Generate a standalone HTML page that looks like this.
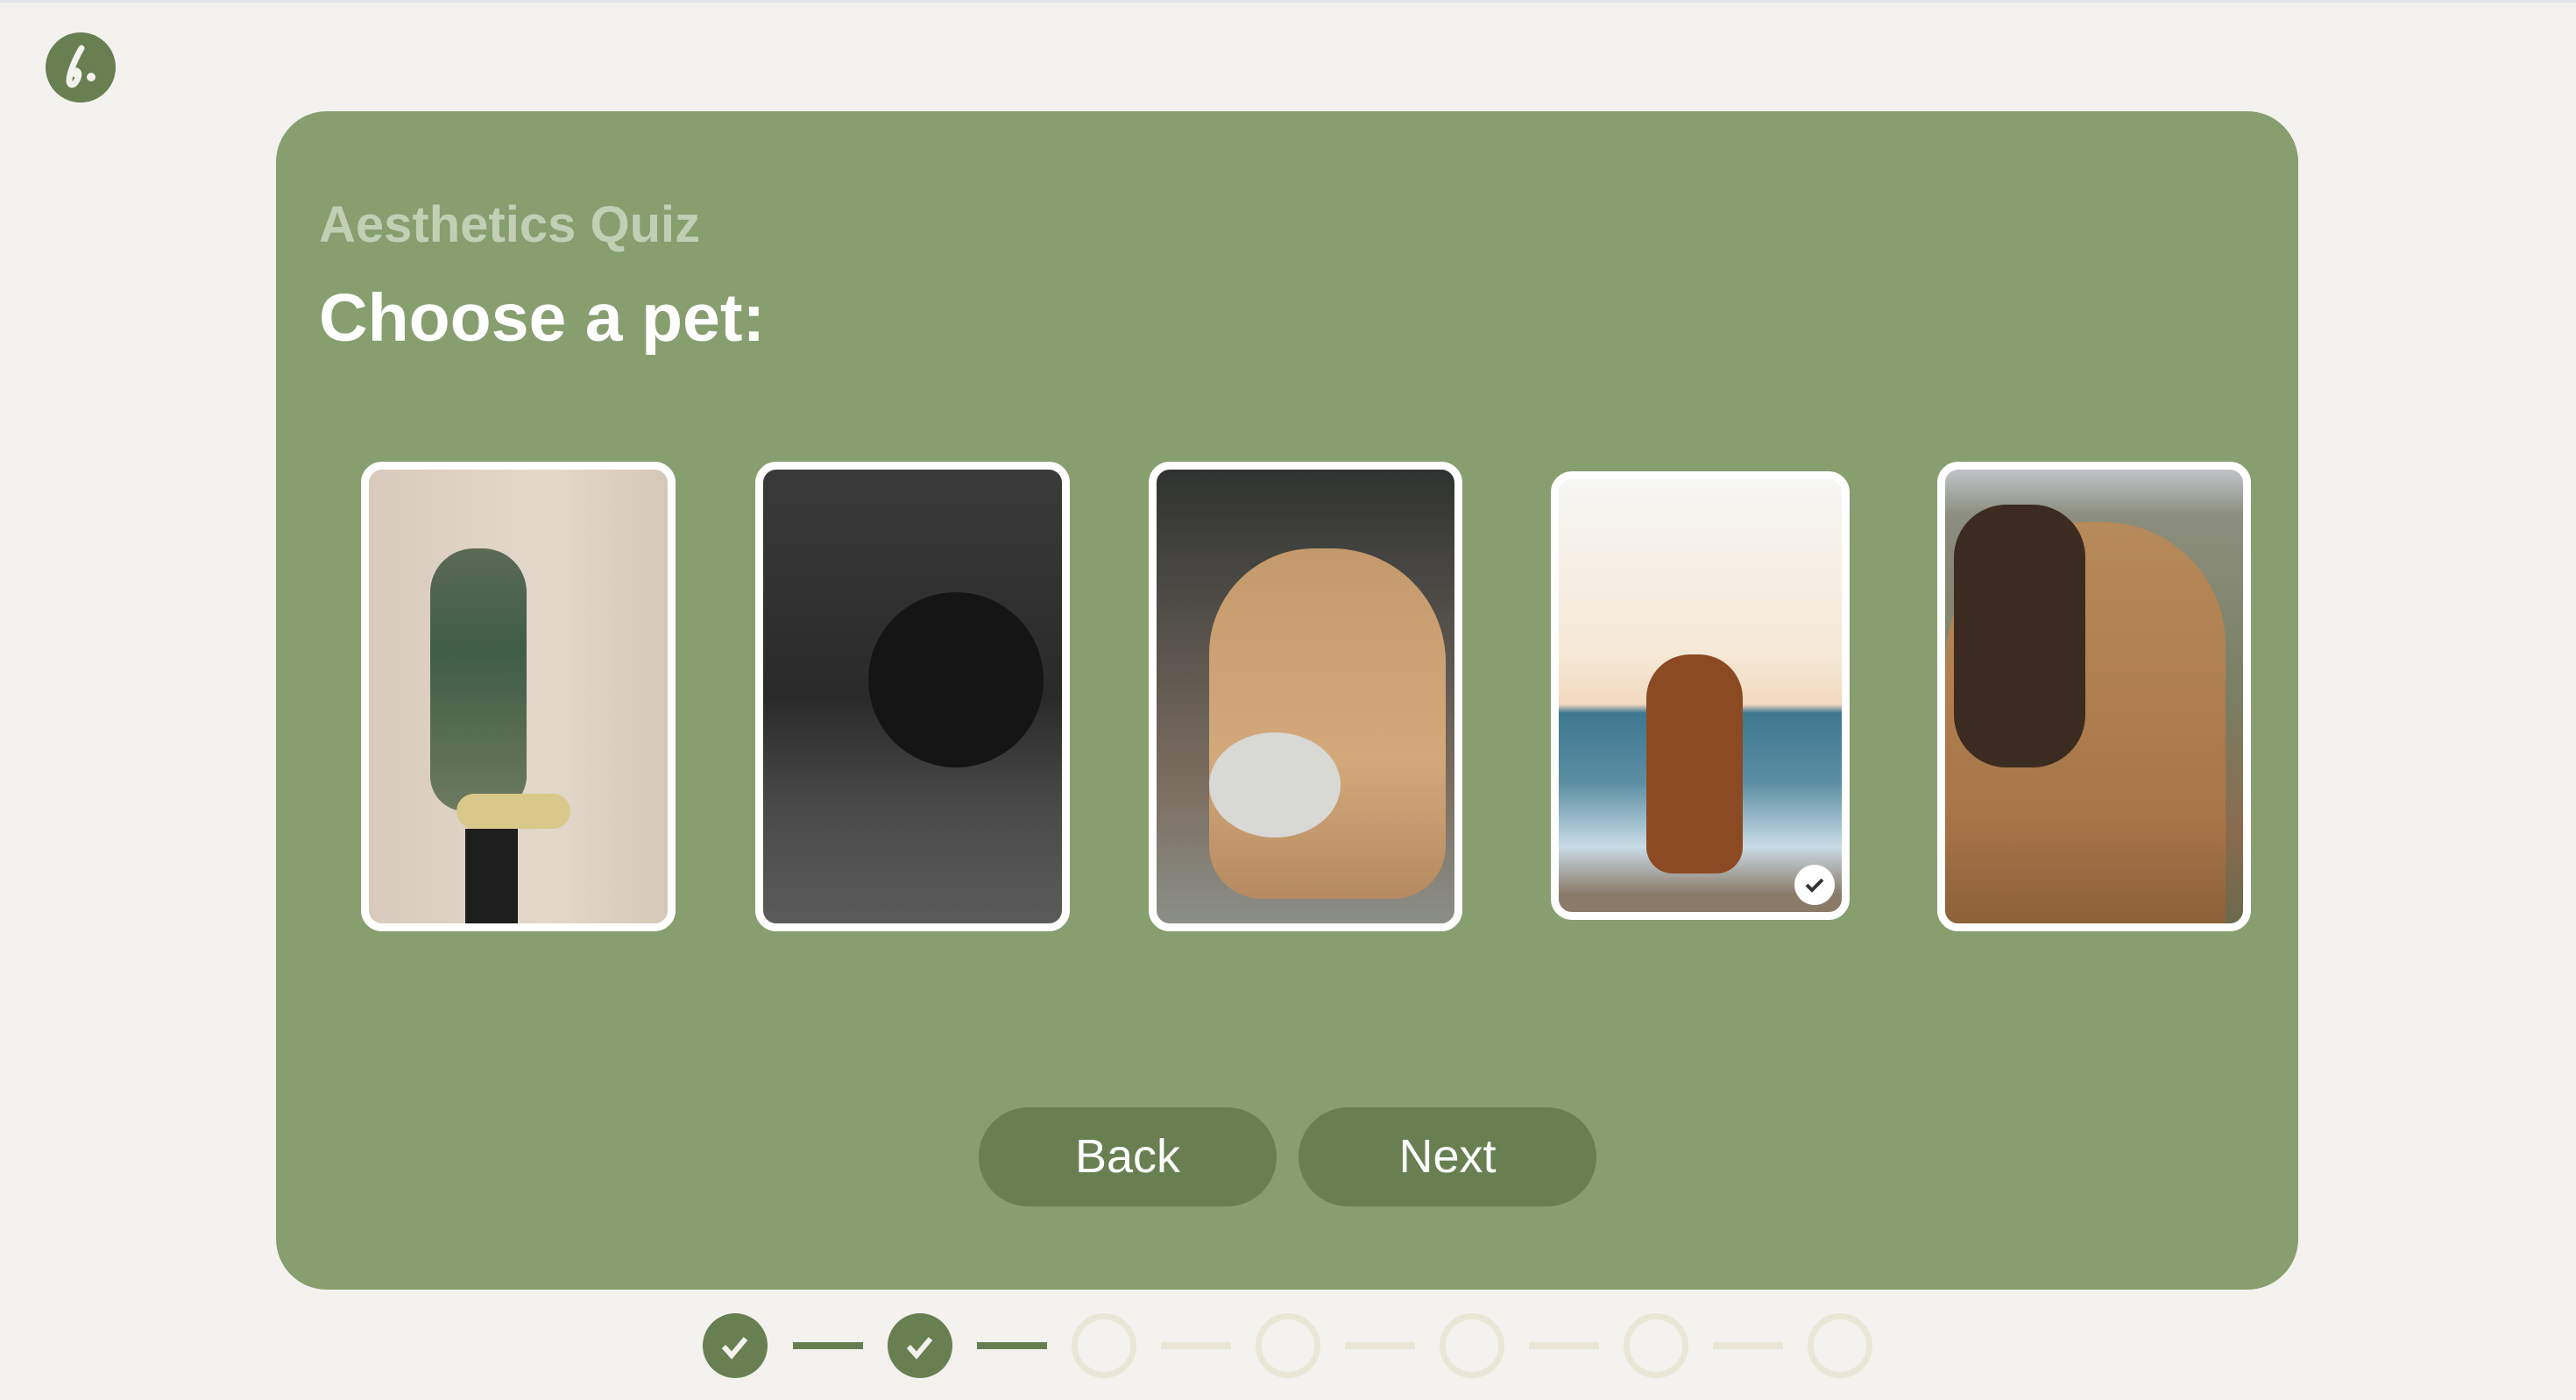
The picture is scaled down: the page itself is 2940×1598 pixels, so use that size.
<!DOCTYPE html>
<html><head><meta charset="utf-8"><style>
*{margin:0;padding:0;box-sizing:border-box}
body{width:2940px;height:1598px;background:#f4f2ee;position:relative;overflow:hidden;font-family:"Liberation Sans",Arial,sans-serif}
.topb{position:absolute;left:0;top:0;width:2940px;height:3px;background:#dfe5e8}
.logo{position:absolute;left:52px;top:37px;width:80px;height:80px;border-radius:50%;background:#677f51}
.card{position:absolute;left:315px;top:127px;width:2308px;height:1345px;border-radius:58px;background:#879e6f}
.t1{position:absolute;left:364px;top:222px;font-size:58px;font-weight:bold;color:#c1cfb5;line-height:70px;white-space:nowrap}
.t2{position:absolute;left:364px;top:318px;font-size:77px;font-weight:bold;color:#fff;line-height:90px;white-space:nowrap}
.pic{position:absolute;border:9px solid #fff;border-radius:24px;overflow:hidden}
.btn{position:absolute;top:1264px;height:113px;width:340px;border-radius:57px;background:#677f51;color:#fff;font-size:54px;text-align:center;line-height:113px}
.c{position:absolute;top:1499px;width:74px;height:74px;border-radius:50%}
.done{background:#677f51}
.empty{border:7px solid #e9e6d6}
.ln{position:absolute;top:1532px;width:80px;height:8px}
</style></head><body>
<div class="topb"></div>
<div class="logo"><svg width="80" height="80" viewBox="0 0 80 80"><path d="M41 18 C34 30 27 46 27 55 C27 61 32 61 35 56 C38 51 39 46 36 44 C34 43 33 46 34 48" fill="none" stroke="#f4f2ee" stroke-width="7" stroke-linecap="round"/><circle cx="52" cy="51" r="5" fill="#f4f2ee"/></svg></div>
<div class="card"></div>
<div class="t1">Aesthetics Quiz</div>
<div class="t2">Choose a pet:</div>

<div class="pic" style="left:412px;top:527px;width:359px;height:536px;background:linear-gradient(90deg,#d8cbbd,#e4d8cb 60%,#d5c8b9)">
 <div style="position:absolute;left:70px;top:90px;width:110px;height:300px;border-radius:50px 50px 40px 40px;background:linear-gradient(180deg,#5a6a55,#3f5e45 40%,#6d7a60)"></div>
 <div style="position:absolute;left:100px;top:370px;width:130px;height:40px;border-radius:20px;background:#d8c98a"></div>
 <div style="position:absolute;left:110px;top:410px;width:60px;height:130px;background:#1e1e1e"></div>
</div>

<div class="pic" style="left:862px;top:527px;width:359px;height:536px;background:linear-gradient(180deg,#3a3a3a,#2a2a2a 50%,#4a4a4a 75%,#5b5b5b)">
 <div style="position:absolute;left:120px;top:140px;width:200px;height:200px;border-radius:50%;background:#151515"></div>
</div>

<div class="pic" style="left:1311px;top:527px;width:358px;height:536px;background:linear-gradient(180deg,#2f3230,#4a4844 25%,#7c6e60 70%,#8b8f88)">
 <div style="position:absolute;left:60px;top:90px;width:270px;height:400px;border-radius:120px 130px 60px 60px;background:linear-gradient(180deg,#c49a6c,#d3a97b 60%,#b58a60)"></div>
 <div style="position:absolute;left:60px;top:300px;width:150px;height:120px;border-radius:50%;background:#d8d8d4"></div>
</div>

<div class="pic" style="left:1770px;top:538px;width:341px;height:512px;background:linear-gradient(180deg,#f6f6f4,#f5e9d6 40%,#f3d9bf 52%,#3e7890 54%,#5b8ea3 70%,#c9dbe6 85%,#8a7a68 96%)">
 <div style="position:absolute;left:100px;top:200px;width:110px;height:250px;border-radius:50px 50px 30px 30px;background:#8c4a22"></div>
 <div style="position:absolute;right:8px;bottom:8px;width:46px;height:46px;border-radius:50%;background:#fff"><svg width="46" height="46" viewBox="0 0 46 46"><path d="M14 23 L20 29 L32 17" fill="none" stroke="#333" stroke-width="4"/></svg></div>
</div>

<div class="pic" style="left:2211px;top:527px;width:358px;height:536px;background:linear-gradient(180deg,#c0c4c8,#8c8e7e 10%,#7a7f62 50%,#8b6a4e 80%,#6b6a4c)">
 <div style="position:absolute;left:0;top:60px;width:320px;height:476px;border-radius:160px 140px 0 0;background:linear-gradient(180deg,#b78a5a,#a87648 70%,#8a5e38)"></div>
 <div style="position:absolute;left:10px;top:40px;width:150px;height:300px;border-radius:60px;background:#3c2b20"></div>
</div>

<div class="btn" style="left:1117px">Back</div>
<div class="btn" style="left:1482px">Next</div>

<div class="c done" style="left:802px"><svg width="74" height="74" viewBox="0 0 74 74"><path d="M24 38 L33 48 L49 29" fill="none" stroke="#f4f2ee" stroke-width="6"/></svg></div>
<div class="ln" style="left:905px;background:#677f51"></div>
<div class="c done" style="left:1013px"><svg width="74" height="74" viewBox="0 0 74 74"><path d="M24 38 L33 48 L49 29" fill="none" stroke="#f4f2ee" stroke-width="6"/></svg></div>
<div class="ln" style="left:1115px;background:#677f51"></div>
<div class="c empty" style="left:1223px"></div>
<div class="ln" style="left:1325px;background:#e9e6d6"></div>
<div class="c empty" style="left:1433px"></div>
<div class="ln" style="left:1535px;background:#e9e6d6"></div>
<div class="c empty" style="left:1643px"></div>
<div class="ln" style="left:1745px;background:#e9e6d6"></div>
<div class="c empty" style="left:1853px"></div>
<div class="ln" style="left:1955px;background:#e9e6d6"></div>
<div class="c empty" style="left:2063px"></div>
</body></html>
